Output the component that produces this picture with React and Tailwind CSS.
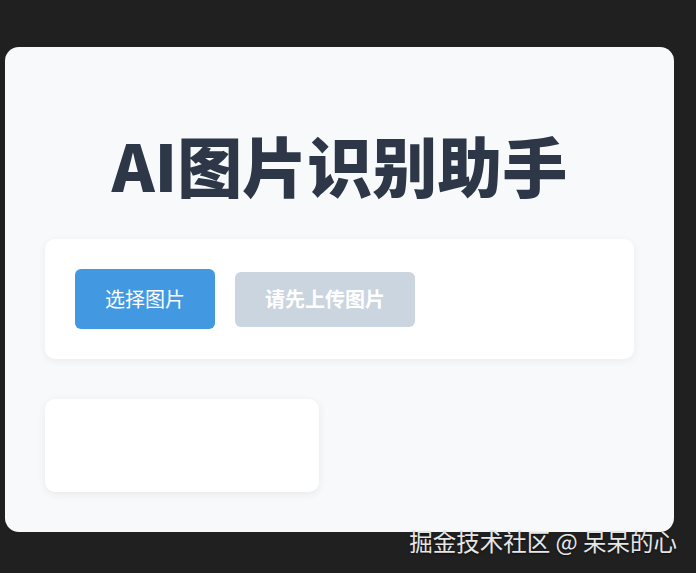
import React from "react";

export default function App() {
  return (
    <div
      className="relative w-[696px] h-[573px] bg-[#202020] overflow-hidden"
      style={{ fontFamily: '"Noto Sans CJK SC", "Liberation Sans", sans-serif' }}
    >
      <div className="flex h-full pt-[47px] pb-[41px] pl-[5px] pr-[22px]">
        {/* ================= CARD ================= */}
        <div className="flex-1 bg-[#f7f9fb] rounded-[14px] px-[40px] pt-[80px] pb-[40px]">
          <h1 className="text-center text-[65px] leading-[74px] font-black text-[#2d3748] mb-[38px]">
            AI图片识别助手
          </h1>

          {/* upload */}
          <div className="bg-white rounded-[10px] shadow-[0_2px_8px_rgba(0,0,0,0.06)] p-[30px] flex items-center gap-5">
            <button className="w-[140px] h-[60px] rounded-[6px] bg-[#4299e1] text-white text-[20px]">
              选择图片
            </button>
            <button className="w-[180px] h-[55px] rounded-[6px] bg-[#cbd5e0] text-white text-[20px] font-bold">
              请先上传图片
            </button>
          </div>

          {/* result */}
          <div className="mt-[40px] w-[274px] h-[93px] bg-white rounded-[10px] shadow-[0_2px_8px_rgba(0,0,0,0.07)]"></div>
        </div>
      </div>

      {/* watermark */}
      <div className="absolute right-[19px] top-[525px] text-[23.5px] leading-[32px] text-[#e6e6e6] [text-shadow:0_1px_2px_rgba(0,0,0,0.6)] whitespace-nowrap">
        掘金技术社区 @ 呆呆的心
      </div>
    </div>
  );
}
